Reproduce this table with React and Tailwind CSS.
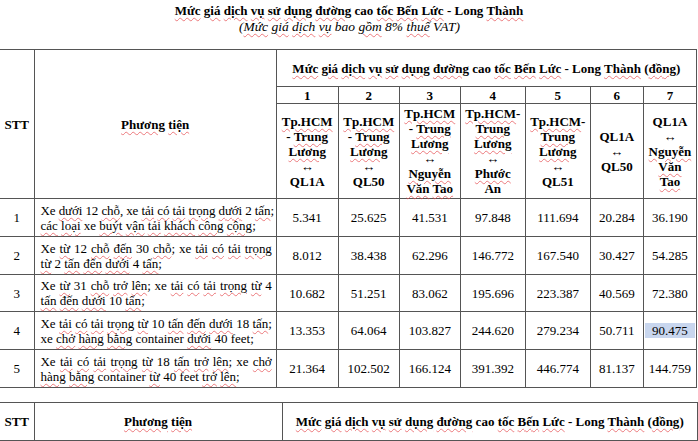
import { Fragment } from "react";

const VN = /[^\x00-\x7F]/;
const EXTRA = new Set(["Tp.HCM", "Trung", "Tao"]);

function Sp({ t }) {
  const words = t.split(" ");
  return words.map((w, i) => {
    const m = w.match(/^([(\-]*)(.*?)([;,)\-]*)$/);
    const core = m[2];
    const mark = (VN.test(core) && core !== "↔") || EXTRA.has(core);
    return (
      <Fragment key={i}>
        {i > 0 && " "}
        {mark ? (
          <>
            {m[1]}
            <span className="underline decoration-wavy decoration-[#e5484d]/70 decoration-1 underline-offset-[2px]">
              {core}
            </span>
            {m[3]}
          </>
        ) : (
          w
        )}
      </Fragment>
    );
  });
}

const routes = [
  ["Tp.HCM", "- Trung", "Lương", "↔", "QL1A"],
  ["Tp.HCM", "- Trung", "Lương", "↔", "QL50"],
  ["Tp.HCM", "- Trung", "Lương", "↔", "Nguyễn", "Văn Tao"],
  ["Tp.HCM-", "Trung", "Lương", "↔", "Phước", "An"],
  ["Tp.HCM-", "Trung", "Lương", "↔", "QL51"],
  ["QL1A", "↔", "QL50"],
  ["QL1A", "↔", "Nguyễn", "Văn", "Tao"],
];

const rows = [
  {
    no: 1,
    name: ["Xe dưới 12 chỗ, xe tải có tải trọng dưới 2 tấn;", "các loại xe buýt vận tải khách công cộng;"],
    prices: ["5.341", "25.625", "41.531", "97.848", "111.694", "20.284", "36.190"],
  },
  {
    no: 2,
    name: ["Xe từ 12 chỗ đến 30 chỗ; xe tải có tải trọng", "từ 2 tấn đến dưới 4 tấn;"],
    prices: ["8.012", "38.438", "62.296", "146.772", "167.540", "30.427", "54.285"],
  },
  {
    no: 3,
    name: ["Xe từ 31 chỗ trở lên; xe tải có tải trọng từ 4", "tấn đến dưới 10 tấn;"],
    prices: ["10.682", "51.251", "83.062", "195.696", "223.387", "40.569", "72.380"],
  },
  {
    no: 4,
    name: ["Xe tải có tải trọng từ 10 tấn đến dưới 18 tấn;", "xe chở hàng bằng container dưới 40 feet;"],
    prices: ["13.353", "64.064", "103.827", "244.620", "279.234", "50.711", "90.475"],
  },
  {
    no: 5,
    name: ["Xe tải có tải trọng từ 18 tấn trở lên; xe chở", "hàng bằng container từ 40 feet trở lên;"],
    prices: ["21.364", "102.502", "166.124", "391.392", "446.774", "81.137", "144.759"],
  },
];

const widths = [34, 242, 62, 61, 61, 65, 65, 53, 53];
const cell = "border border-[#555] p-0 text-center align-middle";
const heading = "Mức giá dịch vụ sử dụng đường cao tốc Bến Lức - Long Thành (đồng)";

export default function App() {
  return (
    <div className="w-[698px] h-[441px] overflow-hidden bg-white text-black font-[family-name:Liberation_Serif,serif] text-[13px] leading-[15px]">
      <div className="pt-[3px] text-center">
        <div className="font-bold text-[13px] leading-[16px]">
          <Sp t="Mức giá dịch vụ sử dụng đường cao tốc Bến Lức - Long Thành" />
        </div>
        <div className="italic text-[13.5px] leading-[16px] pl-[1px]">
          <Sp t="(Mức giá dịch vụ bao gồm 8% thuế VAT)" />
        </div>
      </div>

      <table className="mt-[14px] border-collapse table-fixed w-[697px]">
        <colgroup>
          {widths.map((w, i) => (
            <col key={i} style={{ width: w }} />
          ))}
        </colgroup>
        <tbody>
          <tr className="h-[37px]">
            <td rowSpan={3} className={`${cell} border-l-0 font-bold`}>
              STT
            </td>
            <td rowSpan={3} className={`${cell} font-bold`}>
              <Sp t="Phương tiện" />
            </td>
            <td colSpan={7} className={`${cell} font-bold`}>
              <Sp t={heading} />
            </td>
          </tr>
          <tr className="h-[17px]">
            {routes.map((_, i) => (
              <td key={i} className={`${cell} font-bold`}>
                {i + 1}
              </td>
            ))}
          </tr>
          <tr className="h-[95px]">
            {routes.map((lines, i) => (
              <td key={i} className={`${cell} font-bold`}>
                {lines.map((l, j) => (
                  <div key={j}>
                    <Sp t={l} />
                  </div>
                ))}
              </td>
            ))}
          </tr>
          {rows.map((r) => (
            <tr key={r.no} className={r.no === 3 ? "h-[37px]" : "h-[38px]"}>
              <td className={`${cell} border-l-0`}>{r.no}</td>
              <td className={`${cell} text-left pl-[6px] pr-[4px]`}>
                <div className="whitespace-nowrap tracking-[-0.1px] text-justify [text-align-last:justify]">
                  <Sp t={r.name[0]} />
                </div>
                <div className="whitespace-nowrap">
                  <Sp t={r.name[1]} />
                </div>
              </td>
              {r.prices.map((p, i) => (
                <td key={i} className={cell}>
                  {r.no === 4 && i === 6 ? (
                    <div className="mx-px bg-[#c8d6ee]">{p}</div>
                  ) : (
                    p
                  )}
                </td>
              ))}
            </tr>
          ))}
        </tbody>
      </table>

      <table className="mt-[14px] border-collapse table-fixed w-[698px]">
        <colgroup>
          <col style={{ width: 34 }} />
          <col style={{ width: 248 }} />
          <col />
        </colgroup>
        <tbody>
          <tr className="h-[38px]">
            <td className={`${cell} border-l-0 font-bold`}>STT</td>
            <td className={`${cell} font-bold`}>
              <Sp t="Phương tiện" />
            </td>
            <td className={`${cell} font-bold`}>
              <Sp t={heading} />
            </td>
          </tr>
        </tbody>
      </table>
    </div>
  );
}
